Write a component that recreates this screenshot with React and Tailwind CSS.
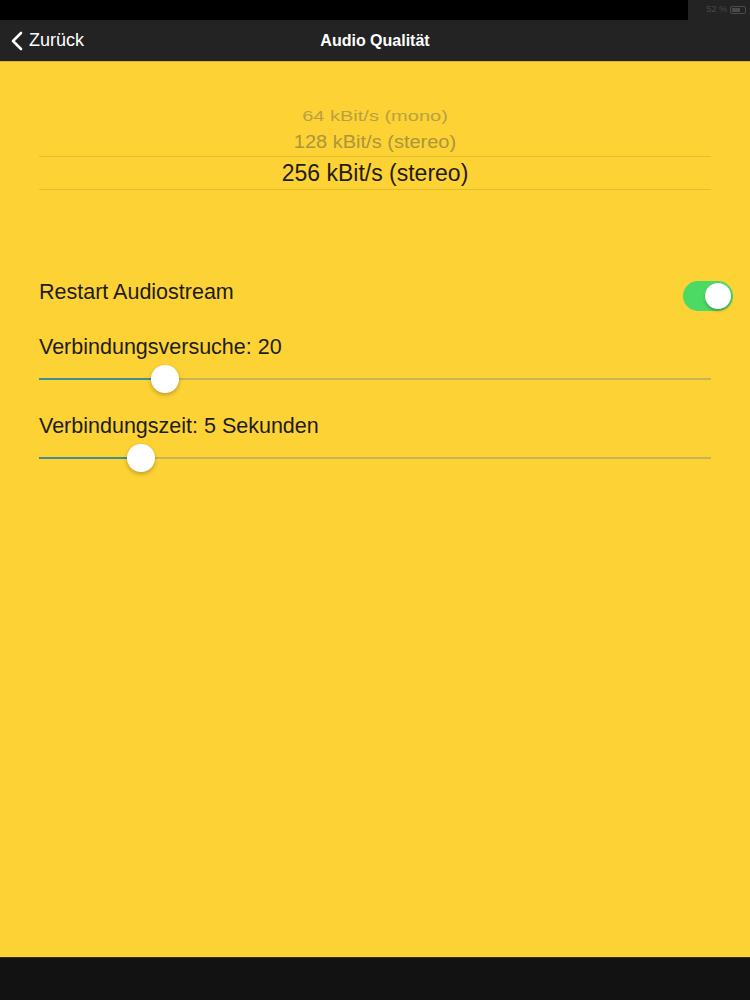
import React from "react";

const font = { fontFamily: '"Liberation Sans", Arial, sans-serif' };

const Slider = ({ label, pos }) => (
  <div className="flex flex-col">
    <div className="text-[21.5px] leading-[24px] text-[#1d1d1b]">{label}</div>
    <div className="relative mt-[6px] h-[28px] flex items-center">
      <div className="h-[2px] w-full bg-[#c9b257]" />
      <div className="absolute left-0 h-[2px] bg-[#3f8d97]" style={{ width: pos }} />
      <div
        className="absolute w-[28px] h-[28px] rounded-full bg-white shadow-[0_2px_4px_rgba(0,0,0,0.25)]"
        style={{ left: pos - 14 }}
      />
    </div>
  </div>
);

export default function App() {
  return (
    <div className="w-[750px] h-[1000px] flex flex-col bg-[#fcd235] overflow-hidden" style={font}>
      {/* status bar */}
      <div className="h-[20px] flex bg-black">
        <div className="flex-1" />
        <div className="w-[62px] bg-[#232323] flex items-center justify-end gap-[3px] pr-[4px] text-[9px] text-[#4a4a4a]">
          <span>52 %</span>
          <div className="w-[16px] h-[8px] border border-[#4a4a4a] rounded-[2px] p-[1px]">
            <div className="w-[8px] h-full bg-[#4a4a4a]" />
          </div>
        </div>
      </div>

      {/* nav bar */}
      <div className="relative h-[42px] bg-[#232323] flex items-center border-b border-[#d8b530]">
        <div className="flex items-center pl-[11px] gap-[6px] text-white text-[18px]">
          <svg width="12" height="20" viewBox="0 0 12 20" fill="none">
            <path d="M10 2 L2 10 L10 18" stroke="white" strokeWidth="2.6" strokeLinecap="round" strokeLinejoin="round" />
          </svg>
          <span>Zurück</span>
        </div>
        <div className="absolute inset-0 flex items-center justify-center text-white text-[16px] font-bold pointer-events-none">
          Audio Qualität
        </div>
      </div>

      {/* content */}
      <div className="flex-1 flex flex-col px-[39px]">
        {/* picker */}
        <div className="flex flex-col items-center mt-[44px]">
          <div className="text-[20px] leading-[20px] h-[20px] text-[#bba043] scale-y-[0.75]">64 kBit/s (mono)</div>
          <div className="text-[20px] leading-[24px] h-[24px] mt-[4px] text-[#ad953d] scale-y-[0.88]">128 kBit/s (stereo)</div>
          <div className="w-full mt-[2px] border-t border-b border-[#e2bd2e] h-[34px] flex items-center justify-center text-[23px] text-[#1f1c12]">
            256 kBit/s (stereo)
          </div>
        </div>

        {/* restart */}
        <div className="flex items-center justify-between mt-[90px] -mr-[22px]">
          <div className="text-[21.5px] leading-[24px] text-[#1d1d1b] mb-[8px]">Restart Audiostream</div>
          <div className="w-[50px] h-[30px] rounded-full bg-[#4cd964] flex items-center justify-end pr-[2px]">
            <div className="w-[26px] h-[26px] rounded-full bg-white shadow-[0_2px_3px_rgba(0,0,0,0.25)]" />
          </div>
        </div>

        <div className="mt-[23px]">
          <Slider label="Verbindungsversuche: 20" pos={126} />
        </div>
        <div className="mt-[21px]">
          <Slider label="Verbindungszeit: 5 Sekunden" pos={102} />
        </div>
      </div>

      {/* bottom bar */}
      <div className="h-[43px] bg-[#121212] border-t border-[#3a2f10]" />
    </div>
  );
}
